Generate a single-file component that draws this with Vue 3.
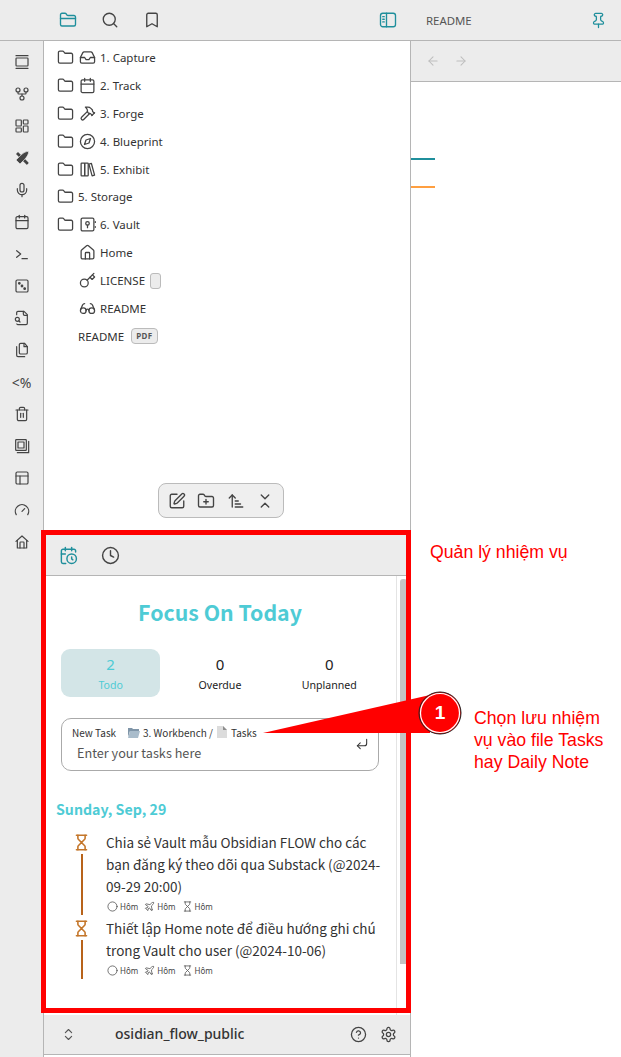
<script setup>
const folderPath = 'M20 20a2 2 0 0 0 2-2V8a2 2 0 0 0-2-2h-7.9a2 2 0 0 1-1.69-.9L9.6 3.9A2 2 0 0 0 7.93 3H4a2 2 0 0 0-2 2v13a2 2 0 0 0 2 2Z'

const p = (...ds) => ds.map(d => `<path d="${d}"/>`).join('')

const icons = {
  folder: p(folderPath),
  folderTab: p(folderPath, 'M2 10h20'),
  search: '<circle cx="11" cy="11" r="8"/>' + p('m21 21-4.3-4.3'),
  bookmark: p('m19 21-7-4-7 4V5a2 2 0 0 1 2-2h10a2 2 0 0 1 2 2v16z'),
  split: '<rect x="2" y="3" width="20" height="18" rx="3"/>' + p('M10 3v18', 'M5 7.5h2', 'M5 11h2', 'M5 14.5h2'),
  pin: p('M12 17v5', 'M9 10.76a2 2 0 0 1-1.11 1.79l-1.78.9A2 2 0 0 0 5 15.24V16a1 1 0 0 0 1 1h12a1 1 0 0 0 1-1v-.76a2 2 0 0 0-1.11-1.79l-1.78-.9A2 2 0 0 1 15 10.76V7a1 1 0 0 1 1-1 2 2 0 0 0 0-4H8a2 2 0 0 0 0 4 1 1 0 0 1 1 1z'),
  left: p('m12 19-7-7 7-7', 'M19 12H5'),
  right: p('m12 5 7 7-7 7', 'M5 12h14'),
  inbox: p('M22 12h-6l-2 3h-4l-2-3H2', 'M5.45 5.11 2 12v6a2 2 0 0 0 2 2h16a2 2 0 0 0 2-2v-6l-3.45-6.89A2 2 0 0 0 16.76 4H7.24a2 2 0 0 0-1.79 1.11z'),
  calendar: '<rect x="3" y="4" width="18" height="18" rx="2"/>' + p('M16 2v4', 'M8 2v4', 'M3 10h18'),
  hammer: p('m15 12-8.373 8.373a1 1 0 1 1-3-3L12 9', 'm18 15 4-4', 'm21.5 11.5-1.914-1.914A2 2 0 0 1 19 8.172V7l-2.26-2.26a6 6 0 0 0-4.202-1.756L9 2.96l.92.82A6.18 6.18 0 0 1 12 8.4V10l2 2h1.172a2 2 0 0 1 1.414.586L18.5 14.5'),
  compass: '<circle cx="12" cy="12" r="10"/><polygon points="16.24 7.76 14.12 14.12 7.76 16.24 9.88 9.88"/>',
  library: '<rect x="3" y="3" width="5" height="18" rx="1"/><rect x="8" y="3" width="5" height="18" rx="1"/>' + p('M14 4.5 17.5 3.5 22 20l-3.5 1z'),
  vault: '<rect x="3" y="3" width="18" height="18" rx="2"/><circle cx="12" cy="10.5" r="2.5"/>' + p('M12 13v3.5', 'M23 8v1', 'M23 15v1'),
  home: p('M15 21v-8a1 1 0 0 0-1-1h-4a1 1 0 0 0-1 1v8', 'M3 10a2 2 0 0 1 .709-1.528l7-5.999a2 2 0 0 1 2.582 0l7 5.999A2 2 0 0 1 21 10v9a2 2 0 0 1-2 2H5a2 2 0 0 1-2-2z'),
  key: '<circle cx="7.5" cy="15.5" r="5.5"/>' + p('m21 2-9.6 9.6', 'm15.5 7.5 3 3L22 7l-3-3'),
  glasses: '<circle cx="6" cy="15" r="4"/><circle cx="18" cy="15" r="4"/>' + p('M14 15a2 2 0 0 0-2-2 2 2 0 0 0-2 2', 'M2.5 13 5 7c.7-1.3 1.4-2 3-2', 'M21.5 13 19 7c-.7-1.3-1.5-2-3-2'),
  slides: '<rect x="3" y="6" width="18" height="12" rx="1"/>' + p('M3 2.5h18', 'M3 21.5h18'),
  fork: '<circle cx="12" cy="18" r="3"/><circle cx="6" cy="6" r="3"/><circle cx="18" cy="6" r="3"/>' + p('M18 9v2c0 .6-.4 1-1 1H7c-.6 0-1-.4-1-1V9', 'M12 12v3'),
  dashboard: '<rect x="3" y="3" width="8" height="9" rx="1"/><rect x="14" y="3" width="7" height="6" rx="1"/><rect x="14" y="12" width="7" height="9" rx="1"/><rect x="3" y="15" width="8" height="6" rx="1"/>',
  mic: p('M12 2a3 3 0 0 0-3 3v7a3 3 0 0 0 6 0V5a3 3 0 0 0-3-3Z', 'M19 10v2a7 7 0 0 1-14 0v-2', 'M12 19v3'),
  terminal: p('m4 17 6-5-6-5', 'M12 19h8'),
  dice: '<rect x="3" y="3" width="18" height="18" rx="2"/><circle cx="8" cy="8" r="1.2" fill="#444"/><circle cx="12" cy="12" r="1.2" fill="#444"/><circle cx="16" cy="16" r="1.2" fill="#444"/>',
  fileSearch: '<circle cx="5" cy="14" r="3"/>' + p('M14 2v4a2 2 0 0 0 2 2h4', 'M4.268 21a2 2 0 0 0 1.727 1H18a2 2 0 0 0 2-2V7l-5-5H6a2 2 0 0 0-2 2v3', 'm9 18-1.5-1.5'),
  copy: p('M20 7v9a2 2 0 0 1-2 2H10a2 2 0 0 1-2-2V4a2 2 0 0 1 2-2h6z', 'M15 2v5h5', 'M4 7v13a2 2 0 0 0 2 2h10'),
  trash: p('M3 6h18', 'M19 6v14c0 1-1 2-2 2H7c-1 0-2-1-2-2V6', 'M8 6V4c0-1 1-2 2-2h4c1 0 2 1 2 2v2', 'M10 11v6', 'M14 11v6'),
  stack: '<rect x="2.5" y="2.5" width="16" height="16" rx="1"/><rect x="6" y="6" width="9" height="9"/>' + p('M22 5v17H5'),
  layout: '<rect x="3" y="3" width="18" height="18" rx="2"/>' + p('M3 9h18', 'M9 21V9'),
  gauge: p('m12 14 4-4', 'M3.34 19a10 10 0 1 1 17.32 0'),
  house: p('M15 21v-8a1 1 0 0 0-1-1h-4a1 1 0 0 0-1 1v8', 'M3 11 12 3l9 8', 'M5 9.5V21h14V9.5'),
  pen: p('M12 3H5a2 2 0 0 0-2 2v14a2 2 0 0 0 2 2h14a2 2 0 0 0 2-2v-7', 'M18.375 2.625a1 1 0 0 1 3 3l-9.013 9.014a2 2 0 0 1-.853.505l-2.873.84a.5.5 0 0 1-.62-.62l.84-2.873a2 2 0 0 1 .506-.852z'),
  folderPlus: p(folderPath, 'M12 10v6', 'M9 13h6'),
  sort: p('m3 8 4-4 4 4', 'M7 4v16', 'M11 12h4', 'M11 16h7', 'M11 20h10'),
  collapse: p('m7 20 5-5 5 5', 'm7 4 5 5 5-5'),
  clock: '<circle cx="12" cy="12" r="10"/>' + p('M12 6v6l4 2'),
  calClock: '<circle cx="16" cy="16" r="6"/>' + p('M21 7.5V6a2 2 0 0 0-2-2H5a2 2 0 0 0-2 2v14a2 2 0 0 0 2 2h3.5', 'M16 2v4', 'M8 2v4', 'M3 10h5', 'M17.5 17.5 16 16.3V14'),
  enter: p('m9 10-5 5 5 5', 'M20 4v7a4 4 0 0 1-4 4H4'),
  updown: p('m7 15 5 5 5-5', 'm7 9 5-5 5 5'),
  help: '<circle cx="12" cy="12" r="10"/>' + p('M9.09 9a3 3 0 0 1 5.83 1c0 2-3 3-3 3', 'M12 17h.01'),
  gear: '<circle cx="12" cy="12" r="3"/>' + p('M12.22 2h-.44a2 2 0 0 0-2 2v.18a2 2 0 0 1-1 1.73l-.43.25a2 2 0 0 1-2 0l-.15-.08a2 2 0 0 0-2.73.73l-.22.38a2 2 0 0 0 .73 2.73l.15.1a2 2 0 0 1 1 1.72v.51a2 2 0 0 1-1 1.74l-.15.09a2 2 0 0 0-.73 2.73l.22.38a2 2 0 0 0 2.73.73l.15-.08a2 2 0 0 1 2 0l.43.25a2 2 0 0 1 1 1.73V20a2 2 0 0 0 2 2h.44a2 2 0 0 0 2-2v-.18a2 2 0 0 1 1-1.73l.43-.25a2 2 0 0 1 2 0l.15.08a2 2 0 0 0 2.73-.73l.22-.39a2 2 0 0 0-.73-2.73l-.15-.08a2 2 0 0 1-1-1.74v-.5a2 2 0 0 1 1-1.74l.15-.09a2 2 0 0 0 .73-2.73l-.22-.38a2 2 0 0 0-2.73-.73l-.15.08a2 2 0 0 1-2 0l-.43-.25a2 2 0 0 1-1-1.73V4a2 2 0 0 0-2-2z'),
  hourglass: p('M5 22h14', 'M5 2h14', 'M17 22v-4.172a2 2 0 0 0-.586-1.414L12 12l-4.414 4.414A2 2 0 0 0 7 17.828V22', 'M7 2v4.172a2 2 0 0 0 .586 1.414L12 12l4.414-4.414A2 2 0 0 0 17 6.172V2'),
  plane: p('M17.8 19.2 16 11l3.5-3.5C21 6 21.5 4 21 3c-1-.5-3 0-4.5 1.5L13 8 4.8 6.2c-.5-.1-.9.1-1.1.5l-.3.5c-.2.5-.1 1 .3 1.3L9 12l-2 3H4l-1 1 3 2 2 3 1-1v-3l3-2 3.5 5.3c.3.4.8.5 1.3.3l.5-.2c.4-.3.6-.7.5-1.2z'),
  circle: '<circle cx="12" cy="12" r="10"/>'
}

const ribbon = ['slides', 'fork', 'dashboard', 'tools', 'mic', 'calendar', 'terminal', 'dice', 'fileSearch', 'copy', 'text', 'trash', 'stack', 'layout', 'gauge', 'house']

const tree = [
  { folder: true, icon: 'inbox', name: '1. Capture' },
  { folder: true, icon: 'calendar', name: '2. Track' },
  { folder: true, icon: 'hammer', name: '3. Forge' },
  { folder: true, icon: 'compass', name: '4. Blueprint' },
  { folder: true, icon: 'library', name: '5. Exhibit' },
  { folder: true, name: '5. Storage' },
  { folder: true, icon: 'vault', name: '6. Vault' },
  { icon: 'home', name: 'Home' },
  { icon: 'key', name: 'LICENSE', pill: true },
  { icon: 'glasses', name: 'README' },
  { name: 'README', badge: 'PDF' }
]

const stats = [
  { value: 2, label: 'Todo', active: true },
  { value: 0, label: 'Overdue' },
  { value: 0, label: 'Unplanned' }
]

const tasks = [
  { text: 'Chia sẻ Vault mẫu Obsidian FLOW cho các bạn đăng ký theo dõi qua Substack (@2024-09-29 20:00)' },
  { text: 'Thiết lập Home note để điều hướng ghi chú trong Vault cho user (@2024-10-06)' }
]

const metaIcons = ['circle', 'plane', 'hourglass']
</script>

<template>
  <div class="app">
    <header class="topbar">
      <div class="top-left">
        <svg class="ico ico-18 teal" viewBox="0 0 24 24" v-html="icons.folderTab"></svg>
        <svg class="ico ico-18" viewBox="0 0 24 24" v-html="icons.search"></svg>
        <svg class="ico ico-18" viewBox="0 0 24 24" v-html="icons.bookmark"></svg>
      </div>
      <svg class="ico ico-18 teal split-btn" viewBox="0 0 24 24" v-html="icons.split"></svg>
      <div class="top-title">README</div>
      <svg class="ico ico-17 teal pin" viewBox="0 0 24 24" v-html="icons.pin"></svg>
    </header>

    <div class="main">
      <!-- ribbon -->
      <nav class="ribbon">
        <div v-for="name in ribbon" :key="name" class="ribbon-btn">
          <span v-if="name === 'text'" class="ribbon-text">&lt;%</span>
          <svg v-else-if="name === 'tools'" class="ico-16" viewBox="0 0 24 24">
            <path d="M3 6 6 3l16 16-1 2-2 1z" fill="#444" />
            <path d="M22 2c-5 0-9 3-13 7l-6 6 6 6 6-6c4-4 7-8 7-13z" fill="#444" stroke="#ececec" stroke-width="1" />
          </svg>
          <svg v-else class="ico ico-16" viewBox="0 0 24 24" v-html="icons[name]"></svg>
        </div>
      </nav>

      <!-- sidebar -->
      <aside class="sidebar">
        <div class="tree">
          <div v-for="item in tree" :key="item.name + item.icon" class="tree-row" :class="{ plain: !item.icon }">
            <svg v-if="item.folder" class="ico ico-17 folder" viewBox="0 0 24 24" v-html="icons.folder"></svg>
            <svg v-if="item.icon" class="ico ico-17 item-icon" :class="{ indented: !item.folder }" viewBox="0 0 24 24" v-html="icons[item.icon]"></svg>
            <span class="tree-name" :class="{ indented: !item.folder && !item.icon }">{{ item.name }}</span>
            <span v-if="item.pill" class="pill"></span>
            <span v-if="item.badge" class="badge">{{ item.badge }}</span>
          </div>
          <div class="float-bar">
            <svg class="ico ico-18" viewBox="0 0 24 24" v-html="icons.pen"></svg>
            <svg class="ico ico-18" viewBox="0 0 24 24" v-html="icons.folderPlus"></svg>
            <svg class="ico ico-18" viewBox="0 0 24 24" v-html="icons.sort"></svg>
            <svg class="ico ico-18" viewBox="0 0 24 24" v-html="icons.collapse"></svg>
          </div>
        </div>

        <section class="panel">
          <div class="panel-tabs">
            <svg class="ico ico-19 teal" viewBox="0 0 24 24" v-html="icons.calClock"></svg>
            <svg class="ico ico-19" viewBox="0 0 24 24" v-html="icons.clock"></svg>
          </div>
          <div class="panel-body">
            <div class="panel-scroll">
              <h1 class="focus-title">Focus On Today</h1>
              <div class="stats">
                <div v-for="s in stats" :key="s.label" class="stat" :class="{ active: s.active }">
                  <div class="stat-value">{{ s.value }}</div>
                  <div class="stat-label">{{ s.label }}</div>
                </div>
              </div>

              <div class="new-task">
                <div class="new-task-head">
                  <span class="new-task-label">New Task</span>
                  <svg class="mini-pic" viewBox="0 0 14 14">
                    <path d="M1 3h4l1 1h6v2H3L1 12z" fill="#7f95a8" />
                    <path d="M3 6h10l-2 7H1z" fill="#a9bccb" />
                  </svg>
                  <span class="crumb">3. Workbench /</span>
                  <svg class="mini-pic doc" viewBox="0 0 14 14">
                    <path d="M2 1h6l4 4v8H2z" fill="#dcdcdc" />
                    <path d="M8 1l4 4H8z" fill="#8d8d8d" />
                  </svg>
                  <span class="crumb">Tasks</span>
                </div>
                <div class="new-task-input">Enter your tasks here</div>
                <svg class="ico ico-14 enter" viewBox="0 0 24 24" v-html="icons.enter"></svg>
              </div>

              <h2 class="date-title">Sunday, Sep, 29</h2>

              <div v-for="task in tasks" :key="task.text" class="task">
                <div class="task-rail">
                  <svg class="ico hourglass" viewBox="3 1 18 22" v-html="icons.hourglass"></svg>
                  <div class="rail-line"></div>
                </div>
                <div class="task-body">
                  <div class="task-text">{{ task.text }}</div>
                  <div class="task-meta">
                    <span v-for="m in metaIcons" :key="m" class="meta-item">
                      <svg class="ico meta-icon" viewBox="0 0 24 24" v-html="icons[m]"></svg>Hôm
                    </span>
                  </div>
                </div>
              </div>
            </div>
            <div class="scrollbar"><div class="thumb"></div></div>
          </div>
        </section>

        <footer class="vault-bar">
          <svg class="ico ico-15 updown" viewBox="0 0 24 24" v-html="icons.updown"></svg>
          <span class="vault-name">osidian_flow_public</span>
          <svg class="ico ico-17" viewBox="0 0 24 24" v-html="icons.help"></svg>
          <svg class="ico ico-17" viewBox="0 0 24 24" v-html="icons.gear"></svg>
        </footer>
      </aside>

      <!-- editor pane -->
      <main class="pane">
        <div class="pane-nav">
          <svg class="ico ico-14 muted" viewBox="0 0 24 24" v-html="icons.left"></svg>
          <svg class="ico ico-14 muted" viewBox="0 0 24 24" v-html="icons.right"></svg>
        </div>
        <div class="pane-body">
          <div class="rule rule-teal"></div>
          <div class="rule rule-orange"></div>
        </div>
      </main>
    </div>

    <!-- annotations drawn on top of the screenshot -->
    <div class="red-box"></div>
    <svg class="callout" viewBox="0 0 621 1057">
      <polygon points="263,733 430,695 430,733" fill="#ff0000" />
      <circle cx="440" cy="713" r="21" fill="#ff0000" stroke="#222" stroke-width="1" />
      <circle cx="440" cy="713" r="19.5" fill="none" stroke="#fff" stroke-width="1.2" />
    </svg>
    <span class="callout-num">1</span>
    <div class="note note-top">Quản lý nhiệm vụ</div>
    <div class="note note-side">Chọn lưu nhiệm<br />vụ vào file Tasks<br />hay Daily Note</div>
  </div>
</template>

<style scoped>
.app {
  position: relative;
  width: 621px;
  height: 1057px;
  overflow: hidden;
  display: flex;
  flex-direction: column;
  background: #fff;
  color: #222;
  font-family: "Noto Sans", "Noto Sans CJK SC", sans-serif;
}

.ico {
  fill: none;
  stroke: #444;
  stroke-width: 1.8;
  stroke-linecap: round;
  stroke-linejoin: round;
  flex-shrink: 0;
}
.ico-14 { width: 14px; height: 14px; }
.ico-15 { width: 15px; height: 15px; }
.ico-16 { width: 16px; height: 16px; }
.ico-17 { width: 17px; height: 17px; }
.ico-18 { width: 18px; height: 18px; }
.ico-19 { width: 19px; height: 19px; }
.teal { stroke: #1f8f9c; }
.muted { stroke: #bdbdbd; }

.topbar {
  height: 40px;
  flex-shrink: 0;
  display: flex;
  align-items: center;
  background: #ececec;
  border-bottom: 1px solid #b5b5b5;
}
.top-left {
  display: flex;
  align-items: center;
  gap: 24px;
  padding-left: 59px;
  width: 320px;
  box-sizing: border-box;
}
.split-btn {
  margin-left: 59px;
}
.top-title {
  margin-left: 29px;
  font-size: 11.4px;
  color: #555;
  flex: 1;
}
.pin {
  margin-right: 14px;
}

.main {
  flex: 1;
  display: flex;
  min-height: 0;
}

.ribbon {
  width: 43px;
  flex-shrink: 0;
  background: #ececec;
  border-right: 1px solid #b5b5b5;
  padding-top: 5px;
}
.ribbon-btn {
  height: 32px;
  display: flex;
  align-items: center;
  justify-content: center;
}
.ribbon-text {
  font-size: 14px;
  color: #444;
}

.sidebar {
  width: 366px;
  flex-shrink: 0;
  border-right: 1px solid #b5b5b5;
  display: flex;
  flex-direction: column;
}

.tree {
  position: relative;
  height: 492px;
  flex-shrink: 0;
  padding-top: 3px;
  box-sizing: border-box;
}
.tree-row {
  height: 28px;
  display: flex;
  align-items: center;
  padding-left: 13px;
  font-size: 11.5px;
  color: #333;
}
.tree-row:first-child {
  height: 27px;
}
.tree-row.plain {
  height: 27.5px;
}
.item-icon {
  margin-left: 5px;
  margin-right: 4px;
}
.item-icon.indented {
  margin-left: 22px;
}
.folder + .tree-name {
  margin-left: 4px;
}
.tree-name.indented {
  margin-left: 21px;
}
.pill {
  width: 9px;
  height: 14px;
  margin-left: 5px;
  background: #ececec;
  border: 1px solid #bbb;
  border-radius: 3px;
}
.badge {
  margin-left: 7px;
  height: 14px;
  padding: 0 4px;
  font-size: 8px;
  font-weight: 700;
  line-height: 13px;
  letter-spacing: 0.4px;
  color: #555;
  background: #ececec;
  border: 1px solid #bbb;
  border-radius: 4px;
}

.float-bar {
  position: absolute;
  left: 114px;
  top: 442px;
  width: 126px;
  height: 35px;
  box-sizing: border-box;
  display: flex;
  align-items: center;
  justify-content: space-between;
  padding: 0 9px;
  background: #efefef;
  border: 1px solid #bbb;
  border-radius: 8px;
}

.panel {
  height: 482px;
  flex-shrink: 0;
  display: flex;
  flex-direction: column;
}
.panel-tabs {
  height: 43px;
  flex-shrink: 0;
  display: flex;
  align-items: center;
  gap: 23px;
  padding: 2px 0 0 15px;
  box-sizing: border-box;
  background: #ececec;
  border-bottom: 1px solid #b5b5b5;
}
.panel-body {
  flex: 1;
  display: flex;
  min-height: 0;
}
.panel-scroll {
  flex: 1;
  min-width: 0;
  padding: 21px 12px 0 12px;
  overflow: hidden;
}
.scrollbar {
  width: 14px;
  flex-shrink: 0;
  box-sizing: border-box;
  border-left: 1px solid #e4e4e4;
  padding: 3px 3px 0 3px;
}
.thumb {
  height: 385px;
  background: #c4c4c4;
  border-radius: 3px 3px 0 0;
}

.focus-title {
  margin: 0;
  font-family: "Noto Sans CJK SC", "Noto Sans", sans-serif;
  font-size: 21.3px;
  line-height: 30px;
  font-weight: 700;
  color: #4ecbd5;
  text-align: center;
}
.stats {
  display: grid;
  grid-template-columns: repeat(3, 1fr);
  gap: 10px;
  margin: 22px 5px 0;
}
.stat {
  height: 48px;
  border-radius: 9px;
  text-align: center;
  color: #222;
  padding-top: 5px;
  box-sizing: border-box;
}
.stat.active {
  background: #d3e5e7;
  color: #4ecbd5;
}
.stat-value {
  font-size: 15px;
  line-height: 20px;
}
.stat-label {
  font-size: 10.6px;
  line-height: 22px;
}

.new-task {
  position: relative;
  height: 53px;
  margin: 21px 5px 0;
  box-sizing: border-box;
  padding: 5px 10px 0;
  border: 1px solid #aaa;
  border-radius: 10px;
}
.new-task-head {
  display: flex;
  align-items: center;
  height: 16px;
  font-size: 10px;
  color: #333;
  font-family: "Noto Sans CJK SC", "Noto Sans", sans-serif;
}
.new-task-label {
  width: 55px;
}
.mini-pic {
  width: 14px;
  height: 14px;
  margin-right: 2px;
}
.mini-pic.doc {
  margin: 0 2px 0 2px;
}
.new-task-input {
  margin: 3px 0 0 5px;
  font-family: "Noto Sans CJK SC", "Noto Sans", sans-serif;
  font-size: 12.7px;
  line-height: 20px;
  color: #555;
}
.enter {
  position: absolute;
  right: 9px;
  top: 18px;
  stroke: #333;
}

.date-title {
  margin: 28px 0 0;
  font-family: "Noto Sans CJK SC", "Noto Sans", sans-serif;
  font-size: 14.2px;
  line-height: 20px;
  font-weight: 700;
  color: #4ecbd5;
}

.task {
  display: flex;
}
.date-title + .task {
  margin-top: 12px;
}
.task-rail {
  width: 50px;
  padding-left: 19px;
  box-sizing: border-box;
  flex-shrink: 0;
  display: flex;
  flex-direction: column;
  padding-top: 3px;
}
.hourglass {
  width: 13px;
  height: 17px;
  stroke: #c4762a;
  stroke-width: 2.2;
}
.rail-line {
  flex: 1;
  width: 2px;
  margin: 3px 0 2px 5.5px;
  background: #b8631a;
}
.task-body {
  flex: 1;
  min-width: 0;
}
.task-text {
  font-family: "Noto Sans CJK SC", "Noto Sans", sans-serif;
  font-size: 13.5px;
  line-height: 22px;
  color: #333;
}
.task-meta {
  display: flex;
  gap: 6px;
  height: 18px;
  margin-bottom: 2px;
  align-items: center;
  padding-left: 1px;
  font-size: 8px;
  color: #444;
}
.meta-item {
  display: flex;
  align-items: center;
  gap: 2px;
}
.meta-icon {
  width: 11px;
  height: 11px;
  stroke-width: 1.6;
}

.vault-bar {
  height: 39px;
  flex-shrink: 0;
  display: flex;
  align-items: center;
  gap: 13px;
  padding: 0 13px 0 17px;
  background: #ececec;
  border-bottom: 1px solid #b5b5b5;
}
.updown {
  stroke: #555;
}
.vault-name {
  flex: 1;
  padding: 0 0 3px 26px;
  font-size: 14px;
  font-weight: 500;
  color: #333;
}

.pane {
  flex: 1;
  display: flex;
  flex-direction: column;
}
.pane-nav {
  height: 40px;
  display: flex;
  align-items: center;
  gap: 14px;
  padding-left: 15px;
  background: #ececec;
  border-bottom: 1px solid #b5b5b5;
}
.pane-body {
  flex: 1;
  padding-top: 76px;
}
.rule {
  width: 24px;
  height: 2px;
}
.rule-teal {
  background: #1f8f9c;
}
.rule-orange {
  margin-top: 26px;
  background: #ff9f40;
}

.red-box {
  position: absolute;
  left: 41px;
  top: 530px;
  width: 370px;
  height: 483px;
  box-sizing: border-box;
  border: 5px solid #ff0000;
}
.callout {
  position: absolute;
  left: 0;
  top: 0;
  width: 621px;
  height: 1057px;
  pointer-events: none;
}
.callout-num {
  position: absolute;
  left: 430px;
  top: 702px;
  width: 20px;
  text-align: center;
  font-family: "Liberation Sans", sans-serif;
  font-size: 19px;
  line-height: 22px;
  font-weight: 700;
  color: #fff;
}
.note {
  position: absolute;
  font-family: "Liberation Sans", sans-serif;
  font-size: 17.7px;
  line-height: 22px;
  color: #ff0000;
}
.note-top {
  left: 430px;
  top: 541px;
}
.note-side {
  left: 474px;
  top: 707px;
}
</style>
